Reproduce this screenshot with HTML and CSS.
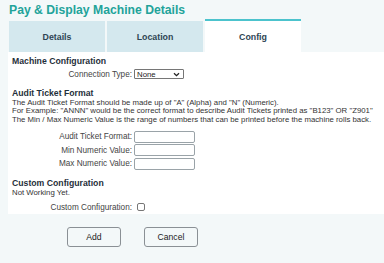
FILE: index.html
```html
<!DOCTYPE html>
<html lang="en">
<head>
  <meta charset="UTF-8">
  <title>Pay &amp; Display Machine Details</title>
  <link rel="stylesheet" href="styles.css">
</head>
<body>

  <h1 class="title">Pay &amp; Display Machine Details</h1>

  <div class="tabs">
    <div class="tab">Details</div>
    <div class="tab">Location</div>
    <div class="tab active">Config</div>
  </div>

  <div class="panel">
    <h3>Machine Configuration</h3>
    <div class="field">
      <label>Connection Type:</label>
      <div class="select">
        <span>None</span>
        <svg width="7" height="5" viewBox="0 0 7 5"><path d="M1 1.2 L3.5 3.6 L6 1.2" fill="none" stroke="#222" stroke-width="1.3"/></svg>
      </div>
    </div>

    <h3 class="section audit">Audit Ticket Format</h3>
    <p>The Audit Ticket Format should be made up of "A" (Alpha) and "N" (Numeric).<br>
    For Example: "ANNN" would be the correct format to describe Audit Tickets printed as "B123" OR "Z901"<br>
    The Min / Max Numeric Value is the range of numbers that can be printed before the machine rolls back.</p>

    <div class="field input-row first">
      <label>Audit Ticket Format:</label>
      <input type="text">
    </div>
    <div class="field input-row">
      <label>Min Numeric Value:</label>
      <input type="text">
    </div>
    <div class="field input-row">
      <label>Max Numeric Value:</label>
      <input type="text">
    </div>

    <h3 class="section custom">Custom Configuration</h3>
    <p>Not Working Yet.</p>
    <div class="field check-row">
      <label>Custom Configuration:</label>
      <span class="checkbox"></span>
    </div>
  </div>

  <div class="actions">
    <button>Add</button>
    <button>Cancel</button>
  </div>

</body>
</html>
```

FILE: styles.css
```css
body {
  margin: 0;
  background: #f3f8f9;
  font-family: "Liberation Sans", Arial, sans-serif;
  color: #333;
  overflow: hidden;
}
.title {
  margin: 0;
  padding: 2px 9px 0;
  font-size: 12.2px;
  line-height: 17px;
  color: #22a39a;
}
.tabs {
  display: flex;
  align-items: flex-end;
  gap: 2px;
  padding-left: 9px;
  height: 33px;
}
.tab {
  width: 96px;
  height: 31px;
  background: #d4e8ee;
  color: #2e4554;
  font-weight: bold;
  font-size: 8.8px;
  display: flex;
  align-items: center;
  justify-content: center;
}
.tab.active {
  background: #fff;
  border-top: 2px solid #4cc3cd;
  height: 31px;
}
.panel {
  background: #fff;
  margin-left: 8px;
  padding: 4px 4px 0;
}
.panel h3 {
  margin: 0;
  font-size: 8.7px;
  line-height: 11px;
  color: #1f2f3a;
}
.panel h3.audit {
  margin-top: 6.5px;
}
.panel h3.custom {
  margin-top: 7px;
}
.panel p {
  margin: 0;
  font-size: 7.8px;
  line-height: 8.5px;
  color: #333;
}
.field {
  display: flex;
  align-items: center;
  gap: 2px;
  font-size: 8.2px;
  color: #444;
  height: 14px;
}
.field label {
  width: 120px;
  flex-shrink: 0;
  text-align: right;
}
.select {
  width: 50px;
  height: 10px;
  box-sizing: border-box;
  display: flex;
  align-items: center;
  justify-content: space-between;
  padding: 0 3px 0 2px;
  border: 1px solid #767676;
  border-radius: 1px;
  background: #fff;
  color: #222;
  font-size: 7.8px;
}
.input-row {
  height: 13.5px;
}
.input-row.first {
  margin-top: 6px;
}
.input-row input {
  width: 61px;
  height: 12px;
  box-sizing: border-box;
  border: 1px solid #9aa3a8;
  border-radius: 2px;
  padding: 0 2px;
}
.check-row {
  margin-top: 3px;
  gap: 5px;
}
.checkbox {
  width: 8px;
  height: 8px;
  box-sizing: border-box;
  border: 1px solid #777;
  border-radius: 2px;
}
.actions {
  display: flex;
  gap: 23px;
  padding: 13px 0 0 67px;
}
.actions button {
  width: 54px;
  height: 20px;
  background: #f3f8f9;
  border: 1px solid #8a9095;
  border-radius: 3px;
  font-family: inherit;
  font-size: 8.6px;
  color: #222;
}
```
